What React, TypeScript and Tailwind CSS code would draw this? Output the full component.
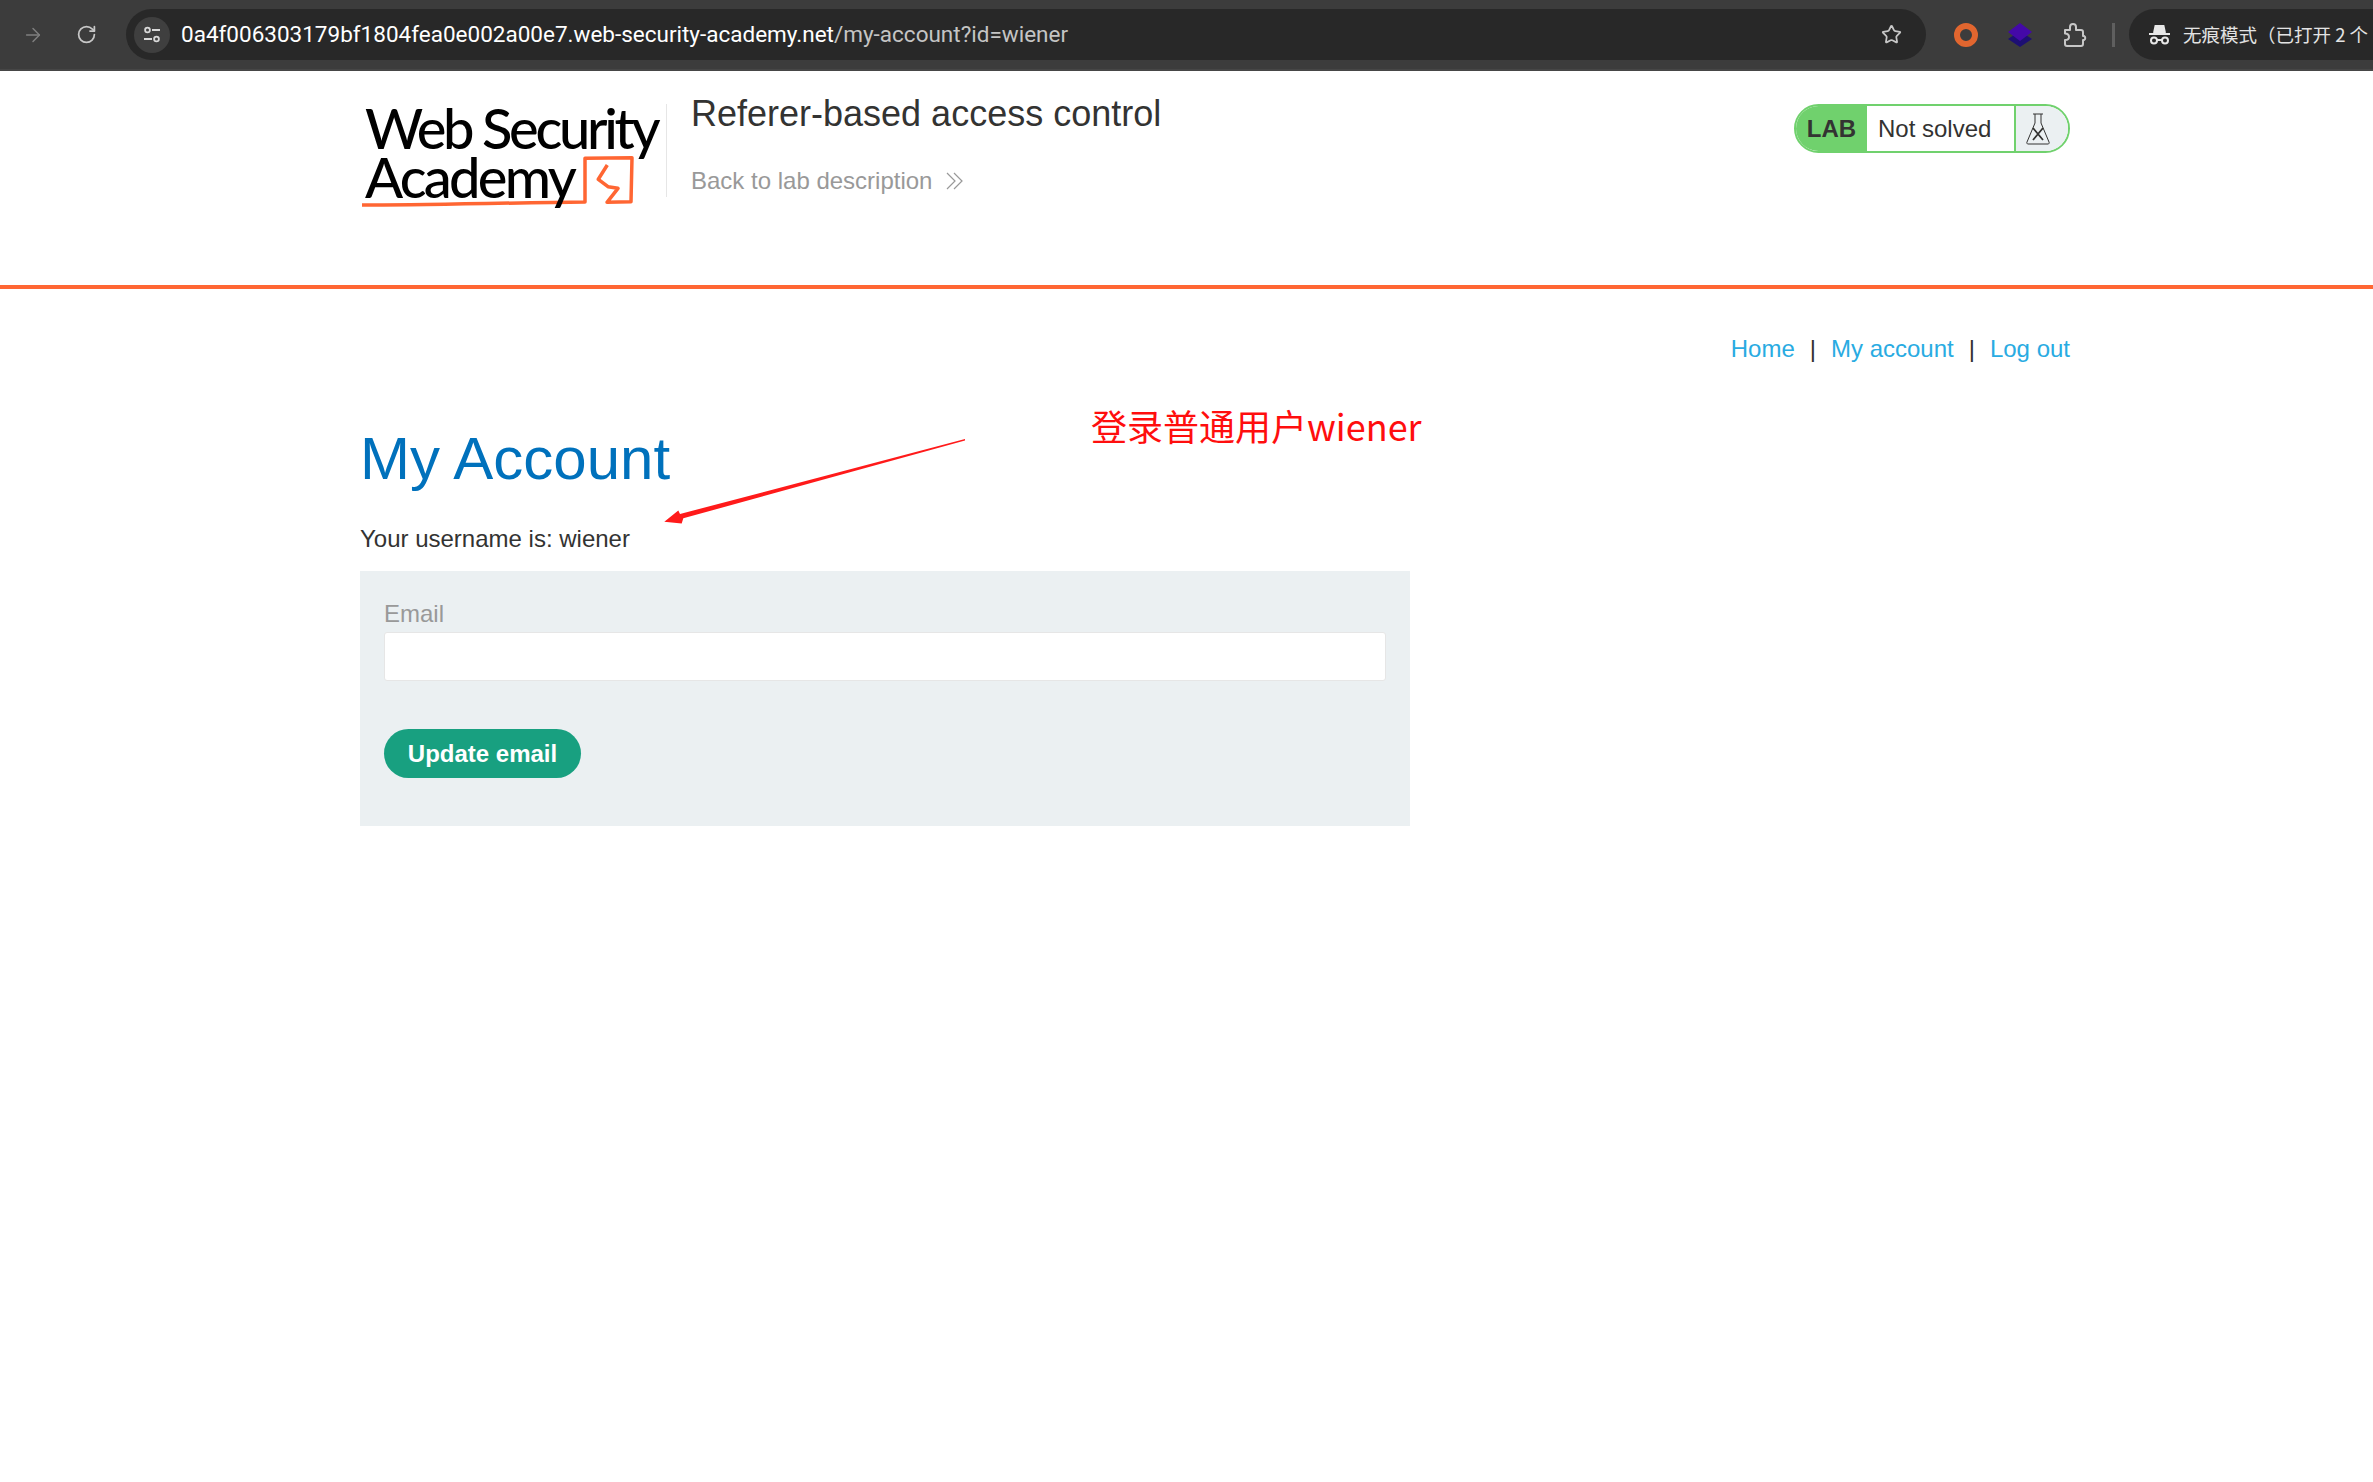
import { ArrowRight, RotateCw, Star } from "lucide-react";

const sans = "font-['Liberation_Sans','Noto_Sans_CJK_SC',sans-serif]";

function BrowserBar() {
  return (
    <div className="flex h-[71px] items-center overflow-hidden border-b-2 border-[#464646] bg-[#3c3c3c]">
      <ArrowRight className="ml-[22px] h-[22px] w-[22px] shrink-0 text-[#7f7f7f]" strokeWidth={1.6} />
      <RotateCw className="ml-[32px] h-[21px] w-[21px] shrink-0 text-[#c7c7c7]" strokeWidth={2} />
      <div className="ml-[29px] flex h-[51px] w-[1800px] shrink-0 items-center rounded-full bg-[#282828]">
        <div className="ml-[8px] flex h-[36px] w-[36px] items-center justify-center rounded-full bg-[#3f3f3f]">
          <svg width="20" height="20" viewBox="0 0 20 20" fill="none" stroke="#d8d8d8" strokeWidth="1.8">
            <circle cx="5.5" cy="5" r="2.4" />
            <path d="M10 5h8M2 14h8" />
            <circle cx="14.5" cy="14" r="2.4" />
          </svg>
        </div>
        <div className="ml-[11px] text-[22.5px] text-white font-['Roboto',sans-serif]">
          0a4f006303179bf1804fea0e002a00e7.web-security-academy.net
          <span className="text-[#c4c4c4]">/my-account?id=wiener</span>
        </div>
        <Star className="ml-auto mr-[24px] h-[21px] w-[21px] text-[#c7c7c7]" strokeWidth={2} />
      </div>
      <div className="ml-[28px] h-[24px] w-[24px] shrink-0 rounded-full border-[6px] border-[#e2662f]" />
      <svg className="ml-[30px] shrink-0" width="24" height="24" viewBox="0 0 24 24">
        <path d="M12 8L24 16 12 24 0 16z" fill="#1d0f73" />
        <path d="M12 0L24 9 12 18 0 9z" fill="#4409a8" />
      </svg>
      <svg className="ml-[31px] shrink-0" width="24" height="24" viewBox="0 0 24 24" fill="none" stroke="#c7c7c7" strokeWidth="2">
        <path d="M2 7h5V4a3 3 0 0 1 6 0v3h5a2 2 0 0 1 2 2v4h1a2.2 2.2 0 0 1 0 4h-1v4a2 2 0 0 1-2 2H4a2 2 0 0 1-2-2v-4c2.5 0 4-1 4-3s-1.500-3.500-4-3.500z" strokeLinejoin="round" />
      </svg>
      <div className="ml-[25px] h-[24px] w-[3px] shrink-0 bg-[#5f5f5f]" />
      <div className="ml-[14px] flex h-[51px] flex-1 items-center overflow-hidden whitespace-nowrap rounded-l-full bg-[#282828] pl-[20px]">
        <svg className="shrink-0" width="21" height="20" viewBox="0 0 21 20" fill="none" stroke="#e8e8e8" strokeWidth="2">
          <path d="M5 8l1.500-7h8L16 8" fill="#e8e8e8" />
          <path d="M0 9h21" />
          <circle cx="5" cy="15.500" r="3" />
          <circle cx="16" cy="15.500" r="3" />
          <path d="M8 15h5" />
        </svg>
        <span className="ml-[13px] text-[18.5px] text-[#e3e3e3] font-['Noto_Sans_CJK_SC',sans-serif]">无痕模式（已打开 2 个</span>
      </div>
    </div>
  );
}

function Logo() {
  return (
    <div className="relative h-[110px] w-[306px] shrink-0 text-black font-['Lato','Liberation_Sans',sans-serif]">
      <svg className="absolute left-0 top-0" width="306" height="112" viewBox="0 0 306 112" fill="none" stroke="#ff6633" strokeWidth="3.500" strokeLinejoin="round">
        <path d="M2 102C60 102 140 100 225 99V55.300L272 54.700 271 98.700 247 99.300 258 85.300 248 83.700 238.300 76.300 247.300 62" />
      </svg>
      <div className="relative pl-[5px] text-[56px] font-medium leading-[49px] whitespace-nowrap">
        <div className="tracking-[-3.3px]">Web Security</div>
        <div className="tracking-[-2.7px]">Academy</div>
      </div>
    </div>
  );
}

export default function App() {
  return (
    <div className={`min-h-[1482px] bg-white text-[#333332] ${sans}`}>
      <BrowserBar />

      {/* Academy header */}
      <header className="h-[218px] border-b-4 border-[#ff6633]">
        <div className="mx-[360px] flex w-[1710px] justify-between pt-[32px]">
          <div className="flex">
            <Logo />
            <div className="mt-[1px] h-[93px] w-px bg-[#e6e6e6]" />
            <div className="ml-[24px]">
              <h2 className="mt-[-1px] text-[36px] leading-[24px] whitespace-nowrap">Referer-based access control</h2>
              <div className="mt-[39px] flex items-center text-[24px] leading-[32px] text-[#999999]">
                Back to lab description
                <svg className="ml-[13px]" width="20" height="20" viewBox="0 0 20 20" fill="none" stroke="#999999" strokeWidth="1.2">
                  <path d="M2 2l8 8-8 8M9 2l8 8-8 8" />
                </svg>
              </div>
            </div>
          </div>
          <div className="mt-[1px] flex h-[49px] w-[276px] overflow-hidden rounded-full border-2 border-[#70d16d]">
            <div className="flex w-[71px] items-center justify-center bg-[#70d16d] text-[24px] font-bold">LAB</div>
            <div className="flex flex-1 items-center pl-[11px] text-[24px]">Not solved</div>
            <div className="flex w-[54px] items-center justify-center border-l-2 border-[#70d16d] bg-[#ebf0f2]">
              <svg className="mr-[8px]" width="24" height="32" viewBox="0 0 24 32" fill="none" stroke="#333332" strokeWidth="1">
                <path d="M7 1h10M9 1v9L1 29c-.5 1 0 2 1 2h20c1 0 1.500-1 1-2L15 10V1" />
                <path d="M7 15l10 12M17 15L7 27" strokeWidth="1.800" />
              </svg>
            </div>
          </div>
        </div>
      </header>

      <main className="relative mx-[360px] w-[1710px]">
        <nav className="flex justify-end gap-[15px] pt-[46px] text-[24px] leading-[28px]">
          <a className="text-[#29abe2]">Home</a>
          <span>|</span>
          <a className="text-[#29abe2]">My account</a>
          <span>|</span>
          <a className="text-[#29abe2]">Log out</a>
        </nav>
        <h1 className="mt-[60px] text-[60px] leading-[72px] text-[#0071bc]">My Account</h1>
        <p className="mt-[30px] text-[24px] leading-[28px]">Your username is: wiener</p>
        <form className="mt-[18px] flex h-[255px] w-[1050px] flex-col items-start bg-[#ebf0f2] p-[24px]">
          <label className="mt-[5px] text-[24px] leading-[28px] text-[#999999]">Email</label>
          <input className="mt-[4px] h-[49px] w-full rounded-[3px] border border-[#e6e6e6] bg-white" />
          <button className="mt-[48px] h-[49px] w-[197px] rounded-full bg-[#18a080] text-[24px] font-bold text-white">Update email</button>
        </form>

        {/* Red annotation over the page */}
        <div className="absolute left-[731px] top-[114px] whitespace-nowrap text-[36px] leading-[44px] text-[#ff0e0e] font-['Noto_Sans_CJK_SC',sans-serif]">登录普通用户wiener</div>
        <svg className="absolute left-[300px] top-[150px]" width="310" height="90" viewBox="0 0 310 90">
          <path d="M305 0L20 75 18.300 71.500 4.300 82.700 21.700 84.500 23.300 79.300 305 1.500z" fill="#ff1a1a" />
        </svg>
      </main>
    </div>
  );
}
